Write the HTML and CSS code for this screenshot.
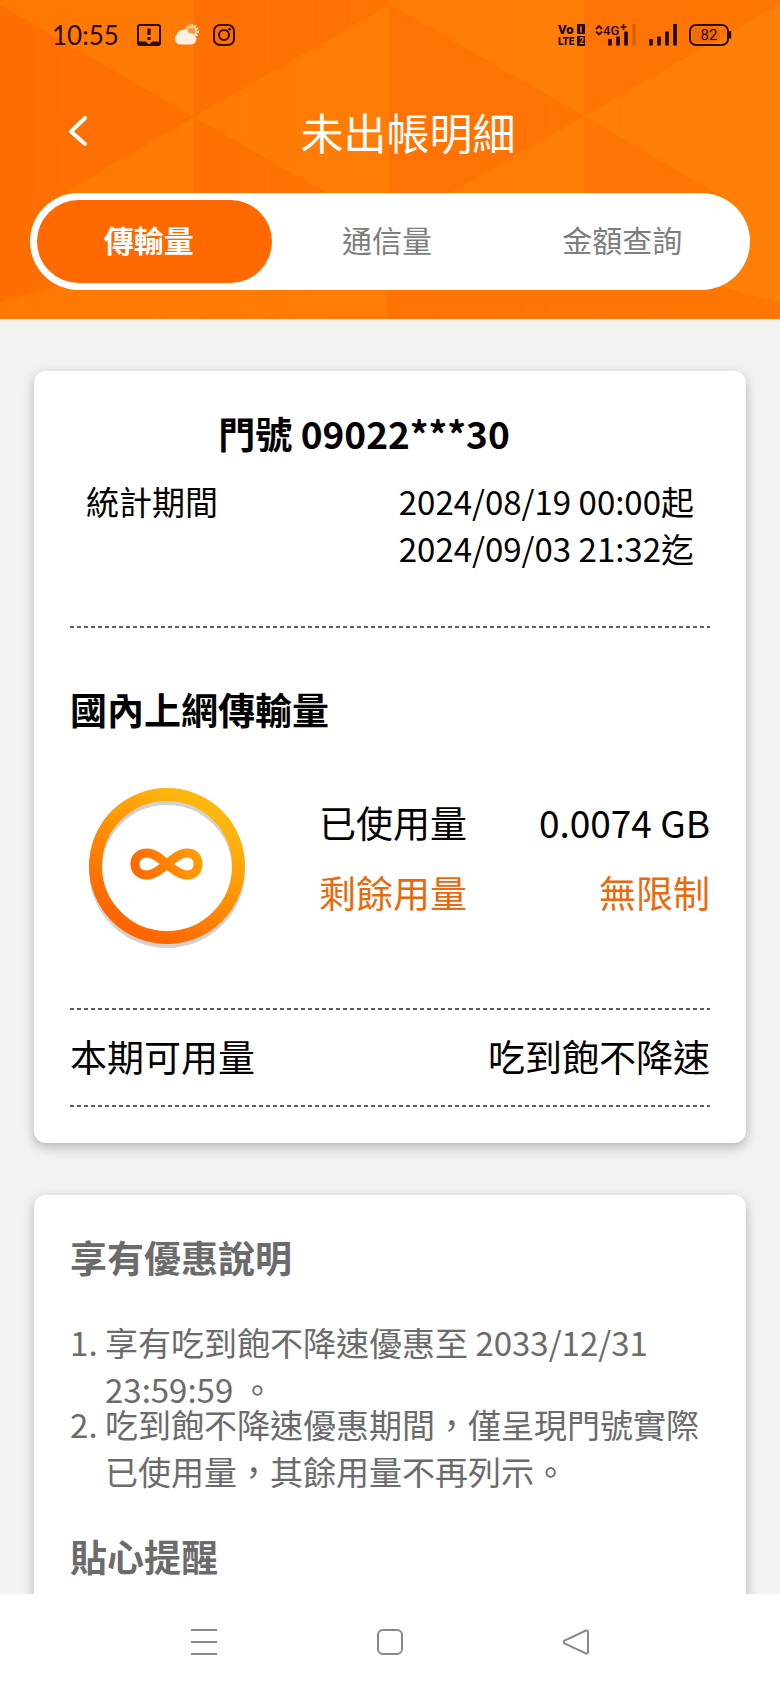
FILE: index.html
```html
<!DOCTYPE html>
<html lang="zh-Hant">
<head>
<meta charset="utf-8">
<meta name="viewport" content="width=device-width, initial-scale=1">
<title>未出帳明細</title>
<link rel="stylesheet" href="styles.css">
</head>
<body class="app">
<header class="header">
  <svg class="header-pattern" viewBox="0 0 780 319" preserveAspectRatio="none" aria-hidden="true">
    <defs>
      <linearGradient id="base" x1="0" x2="1" y1="0" y2="0"><stop offset="0" stop-color="#ff7904"/><stop offset="1" stop-color="#ff8009"/></linearGradient>
      <linearGradient id="facet" gradientUnits="userSpaceOnUse" x1="0" x2="780" y1="0" y2="0"><stop offset="0" stop-color="#ff6e02"/><stop offset="1" stop-color="#ff7605"/></linearGradient>
    </defs>
    <rect width="780" height="319" fill="url(#base)"/>
    <g fill="url(#facet)">
      <path d="M0 5 194 117 60 195V285L0 302Z"/>
      <path d="M194 0V117L389 5V0Z"/>
      <path d="M194 117 389 229H194Z"/>
      <path d="M389 4 584 116 389 229Z"/>
      <path d="M584 0V116L780 4V0Z"/>
      <path d="M584 116 725 198H584Z"/>
      <path d="M387 229 700 280 780 303V319H387Z"/>
    </g>
  </svg>
  <div class="status">
    <div class="status-left">
      <time class="clock">10:55</time>
      <svg width="26" height="24" viewBox="0 0 26 24" aria-hidden="true">
        <rect x="2" y="2" width="22" height="20" rx="2" fill="none" stroke="#2b0c00" stroke-width="2"/>
        <path d="M2 18.500H10L13 22 16 18.500H24V22H2Z" fill="#2b0c00"/>
        <path d="M13 5.500V12M13 14V17" stroke="#2b0c00" stroke-width="3.200"/>
      </svg>
      <svg width="26" height="24" viewBox="0 0 26 24" aria-hidden="true">
        <circle cx="17.500" cy="8.500" r="6.500" fill="none" stroke="#ffe9d0" stroke-width="2" stroke-dasharray="1.600 1.400"/>
        <circle cx="17.500" cy="8.500" r="4.800" fill="#ff9a3c" stroke="#ffe9d0" stroke-width="1.500"/>
        <path d="M7 21.500A5.600 5.600 0 0 1 2.500 12 7 7 0 0 1 15.500 10.500 5.600 5.600 0 0 1 18 21.500Z" fill="#fff0e2"/>
      </svg>
      <svg width="24" height="24" viewBox="0 0 24 24" fill="none" stroke="#2b0c00" stroke-width="2" aria-hidden="true">
        <rect x="2" y="2" width="20" height="20" rx="6"/><circle cx="12" cy="12" r="5"/><circle cx="17.700" cy="6.300" r="1.400" fill="#2b0c00" stroke="none"/>
      </svg>
    </div>
    <svg class="status-right" width="176" height="24" viewBox="556 23 176 24" role="img" aria-label="VoLTE 4G+ 82%">
      <text class="volte-top" x="557" y="34">Vo</text>
      <text class="volte-bottom" x="557" y="45">LTE</text>
      <rect x="576" y="24" width="8" height="10" rx="1" fill="#1d0800"/><rect x="576" y="36" width="8" height="10" rx="1" fill="#1d0800"/>
      <path d="M580 26V32.500" stroke="#ff7604" stroke-width="1.500"/>
      <text class="tiny-box" x="578" y="44">2</text>
      <path d="M595 29 598 26 601 29M595 31.500 598 34.500 601 31.500" fill="none" stroke="#2b0c00" stroke-width="1.800"/>
      <text class="network" x="602" y="35">4G</text>
      <path d="M622.500 24V30M619.500 27H625.500" stroke="#2b0c00" stroke-width="1.600"/>
      <path d="M609 39V45.500M617 36.500V45.500M625 31.500V45.500M650 39V45.500M658 36.500V45.500M666 31.500V45.500M674 24V45.500" stroke="#1d0800" stroke-width="3.600"/>
      <path d="M633 24V45.500" stroke="#d96300" stroke-width="3.600"/>
      <rect x="689" y="25" width="38" height="20" rx="6" fill="none" stroke="#2b0c00" stroke-width="2"/>
      <rect x="692" y="28" width="27" height="14" rx="3" fill="#f06c03"/>
      <path d="M729 31V38.500" stroke="#2b0c00" stroke-width="2.400"/>
      <text class="battery" x="708" y="40">82</text>
    </svg>
  </div>
  <div class="title-bar">
    <button class="back" type="button" aria-label="返回">
      <svg width="20" height="32" viewBox="0 0 20 32" fill="none" stroke="#fff" stroke-width="4" stroke-linecap="round" stroke-linejoin="round"><path d="M17 3 3 16.500 17 29"/></svg>
    </button>
    <h1 class="title">未出帳明細</h1>
  </div>
  <nav class="tabs">
    <button class="tab tab-active" type="button">傳輸量</button>
    <button class="tab" type="button">通信量</button>
    <button class="tab" type="button">金額查詢</button>
  </nav>
</header>

<main class="content">
  <section class="card">
    <h2 class="phone">門號 09022***30</h2>
    <div class="period">
      <span>統計期間</span>
      <span>2024/08/19 00:00起<br>2024/09/03 21:32迄</span>
    </div>
    <hr class="rule">
    <h2 class="heading heading-usage">國內上網傳輸量</h2>
    <div class="usage">
      <svg class="ring" width="160" height="164" viewBox="0 0 160 164" role="img" aria-label="無限制">
        <defs>
          <linearGradient id="ring" x1="0.250" y1="0.900" x2="0.750" y2="0.100"><stop offset="0" stop-color="#ff6600"/><stop offset="1" stop-color="#ffb70d"/></linearGradient>
          <linearGradient id="loop" gradientUnits="userSpaceOnUse" x1="44" x2="116" y1="88" y2="72"><stop offset="0" stop-color="#ff6600"/><stop offset="1" stop-color="#ffa00a"/></linearGradient>
        </defs>
        <circle cx="80" cy="84" r="71.500" fill="none" stroke="#d2d2d2" stroke-width="13"/>
        <circle cx="80" cy="80" r="71.500" fill="none" stroke="url(#ring)" stroke-width="13"/>
        <path d="M80 78C73 72 67 67 60 67C53 67 48 71 48 78S53 89 60 89C67 89 73 84 80 78S93 67 100 67C107 67 111 71 111 78S107 89 100 89C93 89 87 84 80 78Z" fill="none" stroke="url(#loop)" stroke-width="9"/>
      </svg>
      <dl class="amounts">
        <div class="pair"><dt>已使用量</dt><dd>0.0074 GB</dd></div>
        <div class="pair pair-accent"><dt>剩餘用量</dt><dd>無限制</dd></div>
      </dl>
    </div>
    <hr class="rule">
    <div class="pair pair-total"><span>本期可用量</span><span>吃到飽不降速</span></div>
    <hr class="rule">
  </section>

  <section class="card card-notes">
    <h2 class="heading">享有優惠說明</h2>
    <ol class="notes">
      <li>享有吃到飽不降速優惠至 2033/12/31 23:59:59 。</li>
      <li>吃到飽不降速優惠期間，僅呈現門號實際已使用量，其餘用量不再列示。</li>
    </ol>
    <h2 class="heading">貼心提醒</h2>
  </section>
</main>

<nav class="system-nav">
  <button class="system-button" type="button" aria-label="最近使用"><svg width="28" height="28" viewBox="0 0 28 28"><path d="M1 2H27M1 14H27M1 26H27"/></svg></button>
  <button class="system-button" type="button" aria-label="主畫面"><svg width="28" height="28" viewBox="0 0 28 28"><rect x="2" y="2" width="24" height="24" rx="5"/></svg></button>
  <button class="system-button" type="button" aria-label="上一頁"><svg width="28" height="28" viewBox="0 0 28 28"><path d="M24 2.500 2.500 12.500Q1 14 2.500 15.500L24 25.500Q26 26 26 24V4Q26 2 24 2.500Z"/></svg></button>
</nav>
</body>
</html>
```
FILE: styles.css
```css
* {
  box-sizing: border-box;
  margin: 0;
  padding: 0;
}

.app {
  display: flex;
  flex-direction: column;
  height: 100vh;
  background: #f2f2f2;
  color: #000;
  font-family: "Noto Sans CJK TC", sans-serif;
  font-size: 37px;
}

button {
  border: 0;
  background: none;
  font: inherit;
  cursor: pointer;
}

.header {
  position: relative;
  flex: none;
  padding: 23px 30px 29px;
}

.header-pattern {
  position: absolute;
  inset: 0;
  z-index: -1;
  width: 100%;
  height: 100%;
}

.status {
  display: flex;
  justify-content: space-between;
  align-items: center;
  height: 24px;
  padding: 0 17px 0 22px;
}

.status-left {
  display: flex;
  align-items: center;
  gap: 12px;
}

.clock {
  width: 72px;
  color: #2b0c00;
  font: 26px/24px Lato, sans-serif;
}

.volte-top {
  fill: #1d0800;
  font: 900 13px Roboto, sans-serif;
}

.volte-bottom {
  fill: #1d0800;
  font: 900 10px Roboto, sans-serif;
}

.tiny-box {
  fill: #ff7604;
  font: 700 9px Roboto, sans-serif;
}

.network {
  fill: #2b0c00;
  font: 500 13px Roboto, sans-serif;
}

.battery {
  fill: #2b0c00;
  font: 15px Roboto, sans-serif;
  text-anchor: middle;
}

.title-bar {
  display: flex;
  align-items: center;
  height: 96px;
  margin: 34px 0 16px;
  padding-top: 4px;
}

.back {
  display: flex;
  justify-content: flex-end;
  width: 58px;
}

.title {
  flex: 1;
  padding-right: 22px;
  color: #fff;
  font-size: 43px;
  font-weight: 400;
  line-height: 64px;
  text-align: center;
}

.tabs {
  display: grid;
  grid-template-columns: repeat(3, 1fr);
  padding: 7px;
  border-radius: 49px;
  background: #fff;
}

.tab {
  height: 83px;
  padding: 0 6px 6px 0;
  border-radius: 42px;
  color: #7d7d7d;
  font-size: 30px;
}

.tab-active {
  padding-right: 12px;
  background: #ff6900;
  color: #fff;
  font-weight: 700;
}

.content {
  flex: 1;
  min-height: 0;
  overflow-y: auto;
  padding: 52px 34px 0;
  scrollbar-width: none;
}

.card {
  padding: 34px 36px 36px;
  border-radius: 12px;
  background: #fff;
  box-shadow: 0 4px 12px rgba(0, 0, 0, 0.26);
}

.phone {
  padding-right: 52px;
  font-size: 37px;
  line-height: 56px;
  text-align: center;
}

.period {
  display: flex;
  justify-content: space-between;
  padding: 17px 16px 54px;
  font-size: 33px;
  line-height: 47px;
}

.rule {
  height: 2px;
  border: 0;
  background: repeating-linear-gradient(90deg, #5c5c5c 0 4px, transparent 4px 7px);
}

.heading {
  font-size: 37px;
  line-height: 56px;
}

.heading-usage {
  padding-top: 53px;
}

.usage {
  display: flex;
  align-items: flex-start;
  gap: 72px;
  padding: 49px 0 58px 17px;
}

.ring {
  flex: none;
}

.amounts {
  flex: 1;
  padding-top: 8px;
  line-height: 56px;
}

.pair {
  display: flex;
  justify-content: space-between;
}

.amounts .pair + .pair {
  margin-top: 14px;
}

.pair-accent {
  color: #e96a0c;
}

.pair-total {
  padding: 18px 0 21px;
  line-height: 56px;
}

.card-notes {
  margin-top: 52px;
  padding-bottom: 96px;
  color: #6b6b6b;
}

.notes {
  padding: 34px 0 33px 35px;
  font-size: 33px;
  line-height: 47px;
}

.notes li + li {
  margin-top: -12px;
}

.system-nav {
  display: flex;
  flex: none;
  justify-content: center;
  align-items: center;
  gap: 158px;
  height: 96px;
  background: #fff;
}

.system-button {
  display: flex;
  fill: none;
  stroke: #8a8a8a;
  stroke-width: 2;
}
```
